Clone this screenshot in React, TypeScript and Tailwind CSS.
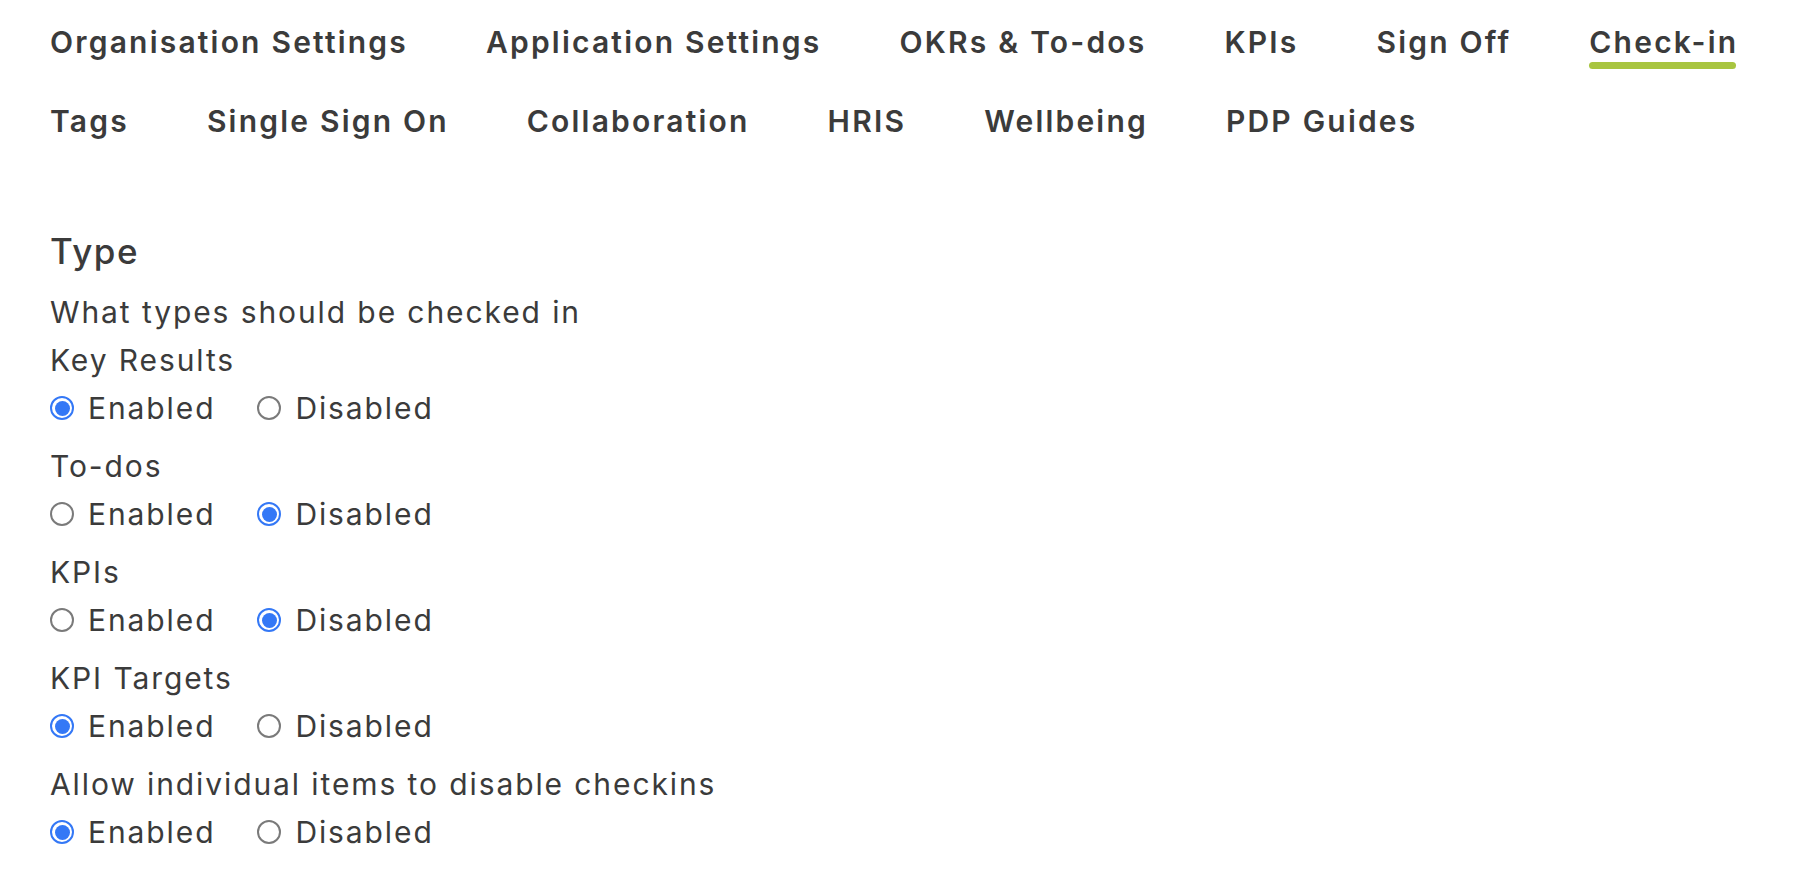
import React, { useState } from "react";

const TABS_TOP = [
  "Organisation Settings",
  "Application Settings",
  "OKRs & To-dos",
  "KPIs",
  "Sign Off",
  "Check-in",
];
const TABS_BOTTOM = [
  "Tags",
  "Single Sign On",
  "Collaboration",
  "HRIS",
  "Wellbeing",
  "PDP Guides",
];

type Setting = { key: string; label: string; enabled: boolean };

const SETTINGS: Setting[] = [
  { key: "keyResults", label: "Key Results", enabled: true },
  { key: "todos", label: "To-dos", enabled: false },
  { key: "kpis", label: "KPIs", enabled: false },
  { key: "kpiTargets", label: "KPI Targets", enabled: true },
  {
    key: "allowDisable",
    label: "Allow individual items to disable checkins",
    enabled: true,
  },
];

function Tab({ label, active }: { label: string; active: boolean }) {
  return (
    <div className="flex flex-col">
      <span className="text-[30px] leading-[36px] font-semibold tracking-[2.2px] text-[#3b3b3b] whitespace-nowrap">
        {label}
      </span>
      <span
        className={
          active
            ? "mt-[2px] mr-[2px] h-[7px] rounded-full bg-[#a8c540]"
            : "mt-[2px] h-[7px]"
        }
      />
    </div>
  );
}

function Radio({ checked }: { checked: boolean }) {
  return checked ? (
    <span className="flex h-[24px] w-[24px] shrink-0 items-center justify-center rounded-full border-[2px] border-[#3478f6] bg-white">
      <span className="h-[15px] w-[15px] rounded-full bg-[#3478f6]" />
    </span>
  ) : (
    <span className="h-[24px] w-[24px] shrink-0 rounded-full border-[2px] border-[#7a7a7a] bg-white" />
  );
}

function Option({
  label,
  checked,
  onClick,
}: {
  label: string;
  checked: boolean;
  onClick: () => void;
}) {
  return (
    <label
      className="flex cursor-pointer items-center gap-[14px]"
      onClick={onClick}
    >
      <Radio checked={checked} />
      <span>{label}</span>
    </label>
  );
}

export default function App(): React.ReactNode {
  const [values, setValues] = useState<Record<string, boolean>>(
    Object.fromEntries(SETTINGS.map((s) => [s.key, s.enabled])),
  );

  const set = (key: string, v: boolean) =>
    setValues((prev) => ({ ...prev, [key]: v }));

  return (
    <main className="min-h-screen bg-white pl-[50px] pt-[24px] font-['Inter',sans-serif] text-[#3b3b3b]">
      {/* Tabs */}
      <nav className="flex flex-col gap-y-[34px]">
        <div className="flex gap-x-[78px]">
          {TABS_TOP.map((t) => (
            <Tab key={t} label={t} active={t === "Check-in"} />
          ))}
        </div>
        <div className="flex gap-x-[78px]">
          {TABS_BOTTOM.map((t) => (
            <Tab key={t} label={t} active={false} />
          ))}
        </div>
      </nav>

      {/* Check-in settings */}
      <section className="mt-[79px] text-[30px] leading-[48px] tracking-[1.9px]">
        <h2 className="text-[35px] font-medium leading-[48px] tracking-[1.5px]">
          Type
        </h2>
        <p className="mt-[13px]">What types should be checked in</p>
        {SETTINGS.map((s) => (
          <div key={s.key} className="mb-[10px]">
            <div>{s.label}</div>
            <div className="flex gap-x-[42px]">
              <Option
                label="Enabled"
                checked={values[s.key]}
                onClick={() => set(s.key, true)}
              />
              <Option
                label="Disabled"
                checked={!values[s.key]}
                onClick={() => set(s.key, false)}
              />
            </div>
          </div>
        ))}
      </section>
    </main>
  );
}
